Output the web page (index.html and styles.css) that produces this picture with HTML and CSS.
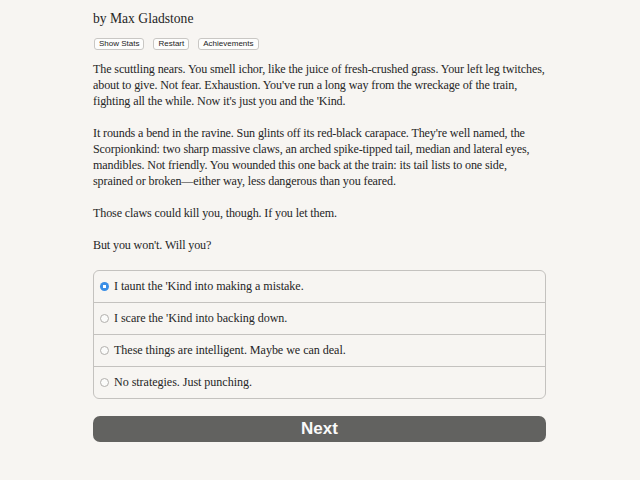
FILE: index.html
```html
<!DOCTYPE html>
<html lang="en">
<head>
<meta charset="utf-8">
<title>by Max Gladstone</title>
<link rel="stylesheet" href="styles.css">
</head>
<body>
<main class="page">
  <header class="header">
    <p class="author">by Max Gladstone</p>
    <nav class="toolbar">
      <button class="tool-btn">Show Stats</button>
      <button class="tool-btn">Restart</button>
      <button class="tool-btn">Achievements</button>
    </nav>
  </header>

  <section class="story">
    <p>The scuttling nears. You smell ichor, like the juice of fresh-crushed grass. Your left leg twitches, about to give. Not fear. Exhaustion. You've run a long way from the wreckage of the train, fighting all the while. Now it's just you and the 'Kind.</p>
    <p>It rounds a bend in the ravine. Sun glints off its red-black carapace. They're well named, the Scorpionkind: two sharp massive claws, an arched spike-tipped tail, median and lateral eyes, mandibles. Not friendly. You wounded this one back at the train: its tail lists to one side, sprained or broken—either way, less dangerous than you feared.</p>
    <p>Those claws could kill you, though. If you let them.</p>
    <p>But you won't. Will you?</p>
  </section>

  <form class="choices">
    <label class="choice"><input type="radio" name="choice" checked><span class="radio"></span>I taunt the 'Kind into making a mistake.</label>
    <label class="choice"><input type="radio" name="choice"><span class="radio"></span>I scare the 'Kind into backing down.</label>
    <label class="choice"><input type="radio" name="choice"><span class="radio"></span>These things are intelligent. Maybe we can deal.</label>
    <label class="choice"><input type="radio" name="choice"><span class="radio"></span>No strategies. Just punching.</label>
  </form>

  <button class="next-btn">Next</button>
</main>
</body>
</html>
```

FILE: styles.css
```css
* { box-sizing: border-box; }

html, body {
  margin: 0;
  padding: 0;
  background: #f7f5f2;
}

body {
  font-family: "Liberation Serif", "Times New Roman", serif;
  color: #262626;
}

.page {
  width: 453px;
  margin: 0 0 0 93px;
  padding-top: 10px;
}

.author {
  margin: 0;
  font-size: 13.6px;
  line-height: 18px;
}

.toolbar {
  display: flex;
  gap: 9px;
  margin-top: 10px;
  padding-left: 1px;
}

.tool-btn {
  font-family: "Liberation Sans", Arial, sans-serif;
  font-size: 8px;
  line-height: 10px;
  height: 12px;
  padding: 0 4px;
  color: #222;
  background: #fdfdfc;
  border: 1px solid #c9c7c4;
  border-radius: 3px;
}

.story {
  margin-top: 11px;
  font-size: 12.1px;
  line-height: 16px;
  letter-spacing: -0.13px;
}

.story p {
  margin: 0 0 16px;
}

.choices {
  margin-top: 17px;
  border: 1px solid #c4c2bf;
  border-radius: 6px;
  overflow: hidden;
}

.choice {
  display: flex;
  align-items: center;
  height: 32px;
  padding-left: 6px;
  font-size: 12.1px;
  letter-spacing: -0.05px;
  border-top: 1px solid #c4c2bf;
}

.choice:first-child { border-top: none; height: 31px; }

.choice input { display: none; }

.radio {
  width: 9px;
  height: 9px;
  margin-right: 5px;
  border-radius: 50%;
  border: 1px solid #b2b0ad;
  background: #fbfbfa;
  flex: none;
}

.choice input:checked + .radio {
  border: none;
  background: radial-gradient(circle, #fff 0 1.5px, #3a8ee6 2px);
}

.next-btn {
  display: block;
  width: 100%;
  height: 26px;
  margin-top: 17px;
  font-family: "Liberation Sans", Arial, sans-serif;
  font-weight: bold;
  font-size: 17px;
  color: #fafafa;
  background: #626260;
  border: none;
  border-radius: 7px;
}
```
